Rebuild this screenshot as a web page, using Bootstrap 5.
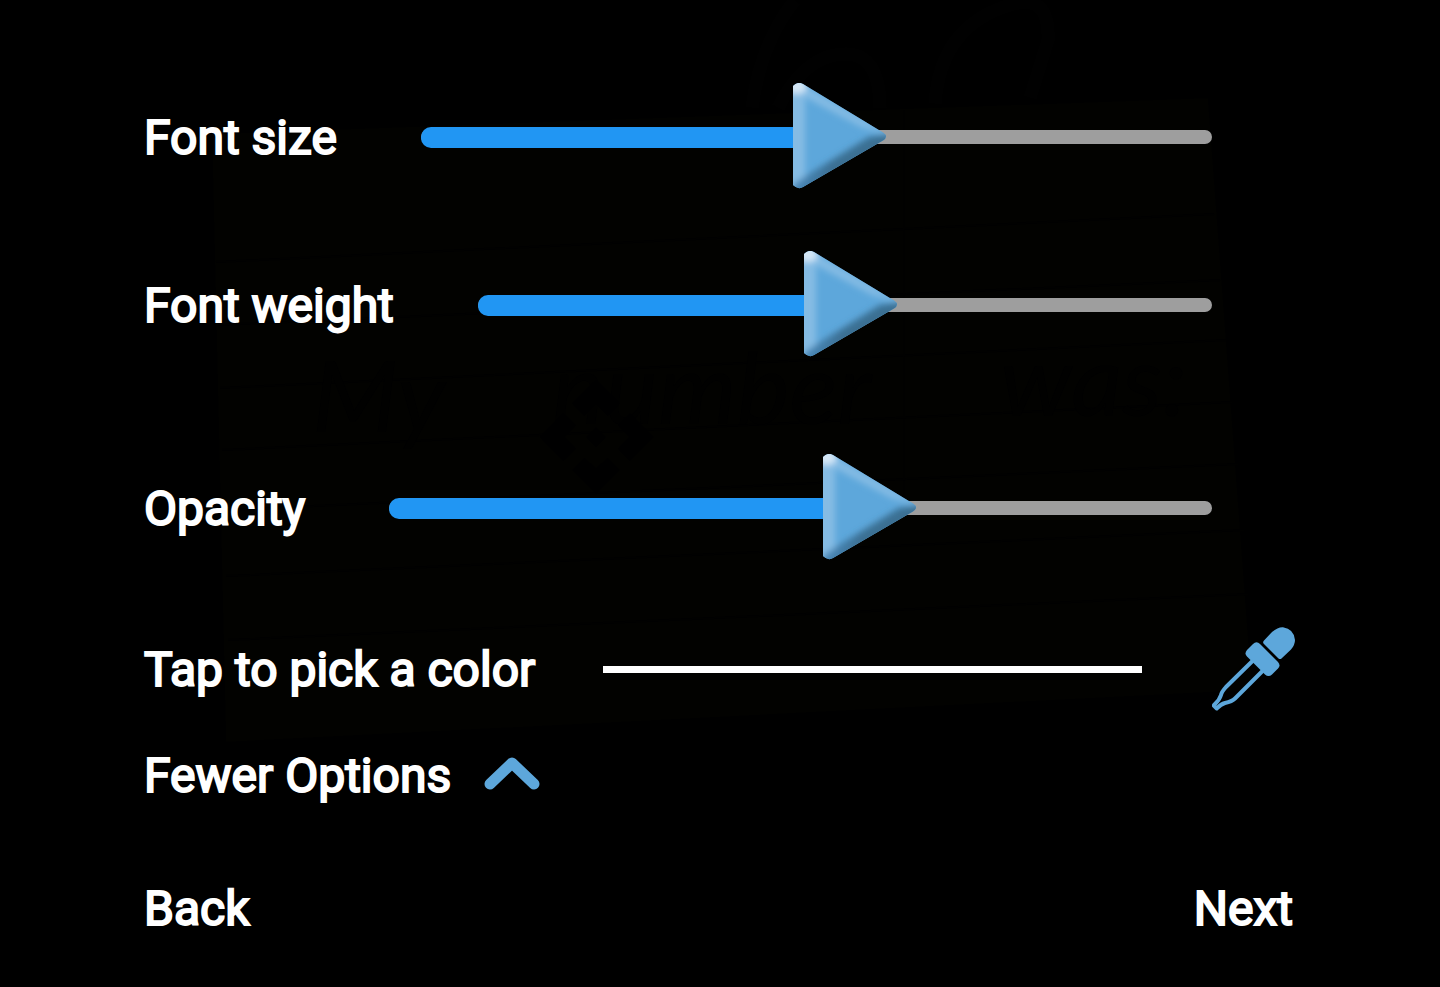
<!DOCTYPE html>
<html lang="en">
<head>
<meta charset="utf-8">
<meta name="viewport" content="width=device-width, initial-scale=1">
<title>Text options</title>
<link href="https://cdn.jsdelivr.net/npm/bootstrap@5.3.0/dist/css/bootstrap.min.css" rel="stylesheet">
<style>
  :root { --accent: #5da7db; --thumb: 94px; }
  body { background: #000; color: #fff; font-family: Roboto, "Liberation Sans", sans-serif; }
  .backdrop { z-index: 0; pointer-events: none; }
  .options { z-index: 1; padding: 83px 10% 46px; font-size: 48px; line-height: 56px; -webkit-text-stroke: 2px #fff; }
  .options label { padding-top: 2px; }
  .options .btn { font-size: 48px; line-height: 56px; border: 0; border-radius: 0; color: #fff; -webkit-text-stroke: 2px #fff; }
  .slider-row { gap: 84px; padding-right: 84px; margin-bottom: 60px; }
  .slider-row.spaced { margin-bottom: 95px; }
  .slider-row.last { margin-bottom: 65px; }
  .slider { display: grid; align-items: center; }
  .slider > * { grid-area: 1 / 1; }
  .slider-rest { height: 14px; border-radius: 7px; background: #9e9e9e; }
  .slider-fill { height: 21px; border-radius: 10px; background: #2196f3; width: calc((100% - var(--thumb)) * var(--value) + 20px); }
  .slider input { -webkit-appearance: none; appearance: none; width: 100%; height: 108px; margin: 0; background: transparent; z-index: 1; }
  .slider input::-webkit-slider-thumb {
    -webkit-appearance: none; width: 94px; height: 108px; border: 0;
    background: center / 94px 108px no-repeat url("data:image/svg+xml,%3Csvg xmlns='http://www.w3.org/2000/svg' viewBox='0 0 94 108'%3E%3Cdefs%3E%3CclipPath id='c'%3E%3Cpath d='M0 3Q5-2 10 1L90 49.500Q96 53.500 90 57.500L10 104Q5 107 0 102Z'/%3E%3C/clipPath%3E%3Cfilter id='b' x='-20%25' y='-20%25' width='140%25' height='140%25'%3E%3CfeGaussianBlur stdDeviation='3'/%3E%3C/filter%3E%3ClinearGradient id='d'%3E%3Cstop stop-color='%234b8cbe'/%3E%3Cstop offset='.4' stop-color='%233b6f93'/%3E%3Cstop offset='1' stop-color='%233b6f93'/%3E%3C/linearGradient%3E%3C/defs%3E%3Cg clip-path='url(%23c)'%3E%3Cpath fill='%235da7db' d='M0 0H94V108H0Z'/%3E%3Cg filter='url(%23b)'%3E%3Cpath fill='%2385bce4' d='M-9-9L98 52L68 44L12 14V93L-9 110Z'/%3E%3Cpath fill='url(%23d)' d='M-4 114L1 101L16 91L76 54L102 50V60L4 116Z'/%3E%3Cellipse cx='4' cy='3' rx='10' ry='8' fill='%23d6e8f7'/%3E%3C/g%3E%3C/g%3E%3C/svg%3E");
  }
  .slider input::-moz-range-thumb { width: 94px; height: 108px; border: 0; border-radius: 0; background: var(--accent); clip-path: polygon(0 0, 100% 50%, 0 100%); }
  .color-row { gap: 68px; margin-bottom: 33px; }
  .swatch-line { height: 7px; background: #fff; }
  .color-row .btn { margin-left: 2px; }
  .more-row { gap: 33px; margin-bottom: 77px; }
  .nav-row { padding-right: 3px; }
  svg { display: block; }
</style>
</head>
<body>
<main class="position-relative min-vh-100 overflow-hidden">
  <!-- Dimmed photo of a ruled note behind the panel -->
  <svg class="backdrop position-absolute top-0 start-0 w-100 h-100" viewBox="0 0 1440 987" preserveAspectRatio="xMidYMid slice" aria-hidden="true">
    <path fill="#020200" d="M212 134L1208 98L1252 690L226 742Z"/>
    <g fill="none" stroke="#010100" stroke-width="2">
      <path d="M216 262L1214 214M218 325L1220 280M220 388L1226 340M222 450L1232 402M224 510L1238 464M226 576L1244 530M228 640L1248 594M904 110V500"/>
    </g>
    <g fill="none" stroke="#010101" stroke-width="14">
      <path d="M752 108Q760 44 795 0M880 108Q880 54 846 54Q805 54 778 108M935 104Q940 26 1010 5Q1050-8 1048 40L1030 98"/>
    </g>
    <g fill="#010100" font-family="Lato, sans-serif" font-style="italic" font-size="100">
      <text x="312" y="432">My</text>
      <text x="552" y="424">number</text>
      <text x="1000" y="416">was:</text>
    </g>
    <path d="M596 380L620 403L608 416L596 404L584 416L572 403ZM540 437L563 413L576 425L565 437L576 449L563 461ZM654 437L630 413L618 425L629 437L618 449L630 461ZM596 427L606 437L596 447L586 437ZM572 470L584 458L596 468L608 458L620 470L596 494Z"/>
  </svg>

  <form class="options position-relative">
    <div class="slider-row d-flex align-items-center">
      <label for="size" class="text-nowrap">Font size</label>
      <div class="slider flex-grow-1" style="--value:.534">
        <div class="slider-rest"></div><div class="slider-fill"></div>
        <input type="range" id="size" min="0" max="1000" value="534">
      </div>
    </div>
    <div class="slider-row spaced d-flex align-items-center">
      <label for="weight" class="text-nowrap">Font weight</label>
      <div class="slider flex-grow-1" style="--value:.509">
        <div class="slider-rest"></div><div class="slider-fill"></div>
        <input type="range" id="weight" min="0" max="1000" value="509">
      </div>
    </div>
    <div class="slider-row last d-flex align-items-center">
      <label for="opacity" class="text-nowrap">Opacity</label>
      <div class="slider flex-grow-1" style="--value:.595">
        <div class="slider-rest"></div><div class="slider-fill"></div>
        <input type="range" id="opacity" min="0" max="1000" value="595">
      </div>
    </div>

    <div class="color-row d-flex align-items-center">
      <label for="picker" class="text-nowrap">Tap to pick a color</label>
      <div class="swatch-line flex-grow-1"></div>
      <button type="button" id="picker" class="btn p-0" aria-label="Pick a color">
        <svg width="84" height="84" viewBox="0 0 84 84" fill="#5da7db" aria-hidden="true">
          <path d="M51.500 16.500Q50.500 15 52 13.500L60 5Q66 0 71 0.300Q82 2 83 13Q83 18 79 22.500L69.500 31.500Q68 32.500 66.500 31.500Z"/>
          <path d="M41 17Q44.500 13.500 48 17L66 35Q69 38.500 66 41.500L60 47.500Q56.500 50.500 53 47.500L35 29.500Q32 26.500 35 23Z"/>
          <path fill="none" stroke="#5da7db" stroke-width="4" stroke-linejoin="round" d="M41 33.500L14 60Q9.500 65 9 68Q7.500 73 2.500 77.500L1.800 78.500L4.800 81.500Q9 77 13 76Q20 74.500 23 71.500L51 43.500"/>
        </svg>
      </button>
    </div>

    <button type="button" class="more-row btn p-0 pt-1 d-flex align-items-center">
      Fewer Options
      <svg class="mb-1" width="56" height="34" viewBox="0 0 56 34" aria-hidden="true">
        <path fill="none" stroke="#5da7db" stroke-width="11" stroke-linecap="round" stroke-linejoin="round" d="M6 27L28 6L50 27"/>
      </svg>
    </button>

    <div class="nav-row d-flex justify-content-between">
      <button type="button" class="btn p-0">Back</button>
      <button type="submit" class="btn p-0">Next</button>
    </div>
  </form>
</main>
<script src="https://cdn.jsdelivr.net/npm/bootstrap@5.3.0/dist/js/bootstrap.bundle.min.js"></script>
</body>
</html>
